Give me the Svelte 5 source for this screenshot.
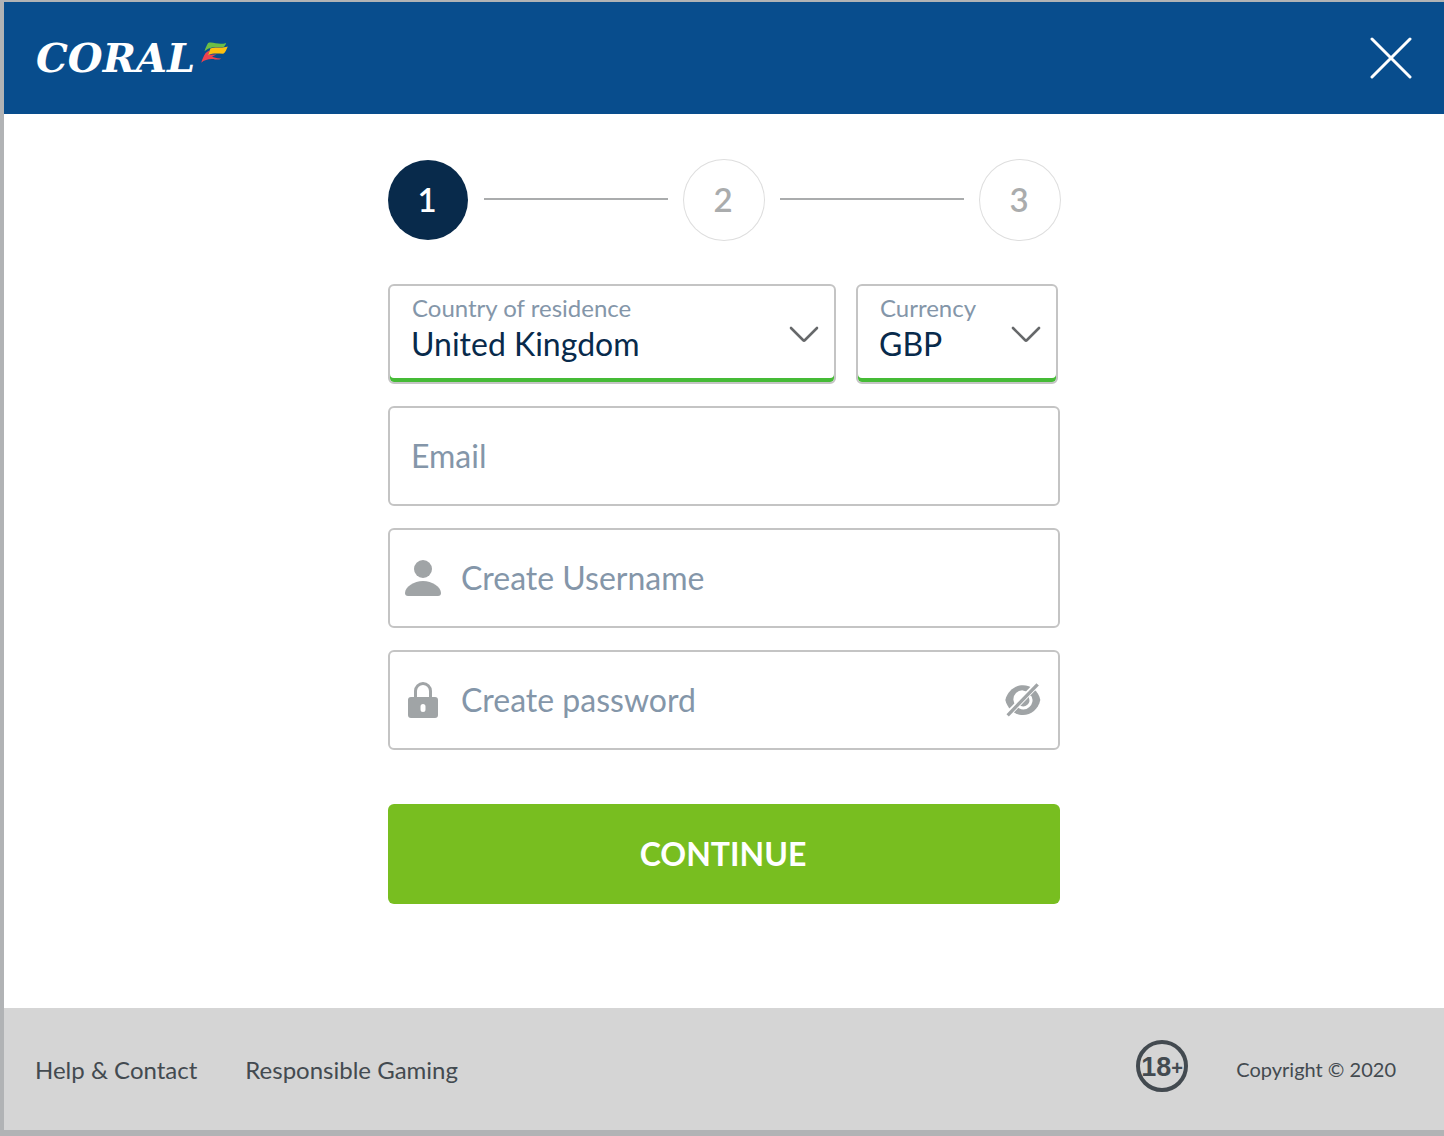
<script>
  let country = $state('United Kingdom')
  let currency = $state('GBP')
  let email = $state('')
  let username = $state('')
  let password = $state('')
  let showPassword = $state(false)

  const steps = [1, 2, 3]
  let current = $state(1)
</script>

<div class="page">
  <header class="header">
    <a class="logo" href="#home" aria-label="Coral home">
      <span>CORAL</span>
      <svg class="flag" viewBox="603 124 81 64" aria-hidden="true">
        <path fill="#6cbe45" d="M624 127C640 122 656 135 679 127C677 133 674 138 671 139C654 140 644 137 631 142C624 144 619 147 613 152C616 142 620 134 624 127Z" />
        <path fill="#ee4250" d="M616 158C611 166 606 176 603 187C614 177 632 174 645 177C652 178 659 178 664 174C652 175 642 171 636 168L650 162L625 163L629 150C624 152 619 155 616 158Z" />
        <path fill="#fdc010" d="M631 144C650 137 662 145 684 138C680 148 676 157 670 160C652 160 640 157 624 164Z" />
      </svg>
    </a>
    <button class="close" type="button" aria-label="Close">
      <svg viewBox="0 0 42 42" aria-hidden="true">
        <path d="M2 2L40 40M40 2L2 40" />
      </svg>
    </button>
  </header>

  <main class="main">
    <ol class="steps">
      {#each steps as step}
        <li class="step" class:active={step === current}>{step}</li>
      {/each}
    </ol>

    <form class="form" onsubmit={(e) => e.preventDefault()}>
      <div class="row">
        <div class="field select-field">
          <label for="country">Country of residence</label>
          <select id="country" bind:value={country}>
            <option>United Kingdom</option>
            <option>Ireland</option>
          </select>
          <svg class="chevron" viewBox="0 0 30 18" aria-hidden="true"><path d="M2 2L14 14Q15 15 16 14L28 2" /></svg>
        </div>
        <div class="field select-field">
          <label for="currency">Currency</label>
          <select id="currency" bind:value={currency}>
            <option>GBP</option>
            <option>EUR</option>
          </select>
          <svg class="chevron" viewBox="0 0 30 18" aria-hidden="true"><path d="M2 2L14 14Q15 15 16 14L28 2" /></svg>
        </div>
      </div>

      <div class="field">
        <input type="email" aria-label="Email" placeholder="Email" bind:value={email} />
      </div>

      <div class="field with-icon">
        <svg class="icon" viewBox="0 0 36 36" aria-hidden="true">
          <circle cx="18" cy="9" r="9" />
          <path d="M18 21C27 21 36 27 36 33Q36 36 33 36H3Q0 36 0 33C0 27 9 21 18 21Z" />
        </svg>
        <input type="text" aria-label="Create Username" placeholder="Create Username" bind:value={username} />
      </div>

      <div class="field with-icon">
        <svg class="icon" viewBox="0 0 36 36" aria-hidden="true">
          <path fill-rule="evenodd" d="M9 15V9a9 9 0 0 1 18 0v6h3q3 0 3 3v15q0 3-3 3H6q-3 0-3-3V18q0-3 3-3ZM12 15H24V9a6 6 0 0 0-12 0ZM18 22q-2.500 0-2.500 2.500v3q0 2.500 2.500 2.500t2.500-2.500v-3q0-2.500-2.500-2.500Z" />
        </svg>
        <input
          type={showPassword ? 'text' : 'password'}
          aria-label="Create password"
          placeholder="Create password"
          bind:value={password}
        />
        <button
          class="eye"
          type="button"
          aria-label="Show password"
          aria-pressed={showPassword}
          onclick={() => (showPassword = !showPassword)}
        >
          <svg viewBox="76 66 108 108" aria-hidden="true">
            <path fill="#a0a4a6" d="M77 120C84 92 106 76 130 76S176 92 182 120C176 148 154 165 130 165S84 148 77 120Z" />
            <path fill="#fff" d="M149 101A27 27 0 1 0 111 139Z" />
            <path fill="none" stroke="#fff" stroke-width="9" stroke-linecap="round" d="M152 112A23 23 0 0 1 120 141" />
            <path stroke="#fff" stroke-width="18" d="M178 67L80 168" />
            <path stroke="#a0a4a6" stroke-width="10" d="M174 73L84 166" />
          </svg>
        </button>
      </div>

      <button class="continue" type="submit">CONTINUE</button>
    </form>
  </main>

  <footer class="footer">
    <nav class="links">
      <a href="#help">Help &amp; Contact</a>
      <a href="#responsible">Responsible Gaming</a>
    </nav>
    <div class="legal">
      <svg class="age" viewBox="0 0 52 58" role="img" aria-label="18+">
        <circle cx="26" cy="26" r="24" />
        <text x="26" y="36" text-anchor="middle">18<tspan class="plus" dy="-1">+</tspan></text>
      </svg>
      <span>Copyright © 2020</span>
    </div>
  </footer>
</div>

<style>
  :global(body) {
    margin: 0;
  }

  .page {
    box-sizing: border-box;
    min-height: 100vh;
    display: flex;
    flex-direction: column;
    border: solid #b1b3b5;
    border-width: 2px 0 6px 4px;
    background: #fff;
    font-family: Lato, sans-serif;
  }

  .header {
    box-sizing: border-box;
    height: 112px;
    padding: 0 32px;
    display: flex;
    align-items: center;
    justify-content: space-between;
    background: #084d8d;
  }

  .logo {
    display: flex;
    align-items: center;
    gap: 6px;
    color: #fff;
    font: italic 700 40px/48px 'DejaVu Serif', serif;
    text-decoration: none;
  }

  .flag {
    width: 27px;
    height: 21px;
    padding-bottom: 12px;
  }

  button {
    padding: 0;
    border: 0;
    background: none;
    cursor: pointer;
  }

  .close svg {
    display: block;
    width: 42px;
    height: 42px;
    fill: none;
    stroke: #fff;
    stroke-width: 3;
    stroke-linecap: round;
  }

  .main {
    flex: 1;
    box-sizing: border-box;
    width: 100%;
    max-width: 672px;
    margin: 0 auto;
    padding: 46px 0 80px;
  }

  .steps {
    display: flex;
    align-items: center;
    margin: 0 0 44px;
    padding: 0;
    list-style: none;
  }

  .step {
    box-sizing: border-box;
    display: flex;
    align-items: center;
    justify-content: center;
    width: 80px;
    height: 80px;
    padding: 0 2px 2px 0;
    border-radius: 50%;
    box-shadow: 0 0 0 1px #dedede;
    color: #aaacad;
    font-size: 33px;
    font-weight: 600;
    position: relative;
  }

  .step.active {
    background: #082a4b;
    box-shadow: none;
    color: #fff;
  }

  .step + .step {
    margin-left: 216px;
  }

  /* connector drawn in the gap before each following step */
  .step + .step::before {
    content: '';
    position: absolute;
    right: 96px;
    top: 38px;
    width: 184px;
    height: 2px;
    background: #aaacad;
  }

  .form {
    display: flex;
    flex-direction: column;
    gap: 22px;
  }

  .row {
    display: grid;
    grid-template-columns: minmax(0, 448px) 202px;
    gap: 20px;
  }

  .field {
    box-sizing: border-box;
    height: 100px;
    display: flex;
    align-items: center;
    position: relative;
    border: 2px solid #c4c4c4;
    border-radius: 6px;
    background: #fff;
  }

  .select-field {
    box-shadow: inset 0 -4px #45bb36;
  }

  .field label {
    position: absolute;
    left: 22px;
    top: 7px;
    color: #8496a9;
    font-size: 24px;
    line-height: 30px;
    pointer-events: none;
  }

  select,
  input {
    box-sizing: border-box;
    width: 100%;
    height: 96px;
    margin: 0;
    border: 0;
    outline: 0;
    background: transparent;
    color: #082a4b;
    font: 32px/40px Lato, sans-serif;
  }

  select {
    appearance: none;
    padding: 38px 60px 18px 21px;
  }

  input {
    min-width: 0;
    padding: 0 21px 2px;
  }

  input::placeholder {
    color: #8496a9;
    opacity: 1;
  }

  .chevron {
    position: absolute;
    right: 15px;
    top: 40px;
    width: 30px;
    height: 18px;
    fill: none;
    stroke: #66686a;
    stroke-width: 2.6;
    stroke-linecap: round;
    pointer-events: none;
  }

  .with-icon {
    padding: 0 17px 0 15px;
  }

  .with-icon input {
    padding: 0 20px 2px;
  }

  .icon {
    flex: none;
    width: 36px;
    height: 36px;
    fill: #a0a4a6;
  }

  .eye svg {
    display: block;
    width: 36px;
    height: 36px;
  }

  .continue {
    height: 100px;
    margin-top: 32px;
    padding-right: 2px;
    border-radius: 6px;
    background: #78be20;
    color: #fff;
    font: 700 32px/40px Lato, sans-serif;
  }

  .footer {
    box-sizing: border-box;
    min-height: 122px;
    padding: 0 48px 0 31px;
    display: flex;
    align-items: center;
    justify-content: space-between;
    background: #d5d5d5;
    color: #434a50;
    font-size: 24px;
  }

  .links,
  .legal {
    display: flex;
    align-items: center;
    gap: 48px;
  }

  .links a {
    color: inherit;
    text-decoration: none;
  }

  .legal {
    font-size: 20px;
  }

  .age {
    width: 52px;
    height: 58px;
    fill: #434a50;
    font: 700 27px 'Liberation Sans', sans-serif;
  }

  .age circle {
    fill: none;
    stroke: #434a50;
    stroke-width: 4;
  }

  .plus {
    font-size: 20px;
  }
</style>
